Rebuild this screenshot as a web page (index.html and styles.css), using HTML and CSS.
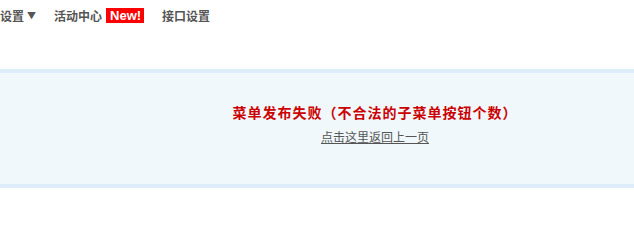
FILE: index.html
```html
<!DOCTYPE html>
<html lang="zh-CN">
<head>
<meta charset="utf-8">
<title>菜单发布失败</title>
<link rel="stylesheet" href="styles.css">
</head>
<body>
<div class="header">
  <ul class="nav">
    <li class="nav-item">设置<span class="caret">▼</span></li>
    <li class="nav-item">活动中心<span class="badge">New!</span></li>
    <li class="nav-item">接口设置</li>
  </ul>
</div>
<div class="msg-box">
  <p class="msg-title">菜单发布失败（不合法的子菜单按钮个数）</p>
  <p class="msg-link"><a href="#">点击这里返回上一页</a></p>
</div>
</body>
</html>
```
FILE: styles.css
```css
html, body {
  margin: 0;
  padding: 0;
  background: #fff;
  font-family: "Noto Sans CJK SC", "Noto Sans", sans-serif;
}
.header {
  height: 69px;
}
.nav {
  list-style: none;
  margin: 0;
  padding: 8px 0 0 0;
  display: flex;
  align-items: flex-end;
  gap: 18px;
  height: 15px;
}
.nav-item {
  display: flex;
  align-items: flex-end;
  font-size: 12px;
  font-weight: bold;
  color: #555;
  line-height: 15px;
  height: 15px;
}
.caret {
  font-size: 9px;
  margin-left: 3px;
  color: #555;
}
.badge {
  margin-left: 4px;
  background: #ff0000;
  color: #fff;
  font-family: "Liberation Sans", Arial, sans-serif;
  font-weight: bold;
  font-size: 13px;
  line-height: 15px;
  height: 15px;
  padding: 0 3px 0 4px;
}
.msg-box {
  border-top: 4px solid #ddedf9;
  border-bottom: 4px solid #ddedf9;
  background: #f0f8fc;
  height: 111px;
  box-sizing: content-box;
  padding-left: 116px;
  text-align: center;
}
.msg-title {
  margin: 0;
  padding-top: 29px;
  font-size: 14px;
  line-height: 20px;
  font-weight: bold;
  letter-spacing: 1px;
  color: #cc0000;
}
.msg-link {
  margin: 6px 0 0 0;
  font-size: 12px;
  line-height: 18px;
}
.msg-link a {
  color: #555;
  text-decoration: underline;
}
```
